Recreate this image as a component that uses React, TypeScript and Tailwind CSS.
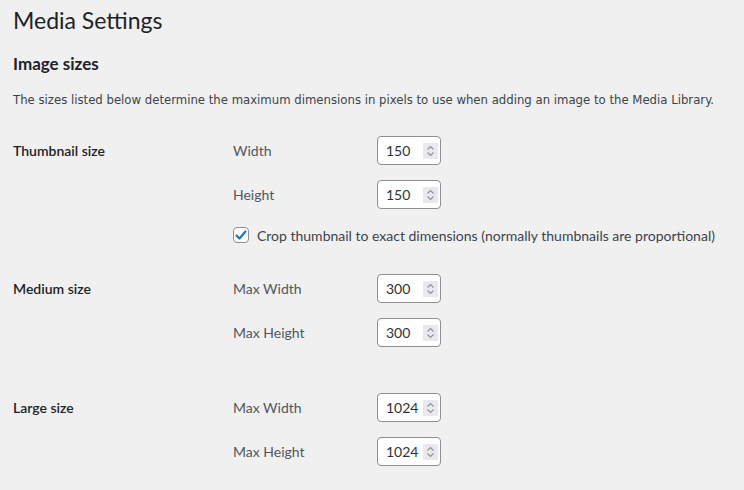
import type { ReactNode } from "react";

const font = { fontFamily: "Lato, 'Noto Sans', sans-serif" };

function Spinner() {
  return (
    <span className="flex h-[16px] w-[15px] items-center justify-center bg-[#e9e9ed]">
      <svg width="9" height="12" viewBox="0 0 9 12" fill="none" stroke="#8c8f94" strokeWidth="1.1">
        <path d="M1.5 4.5 L4.5 1.5 L7.5 4.5" />
        <path d="M1.5 7.5 L4.5 10.5 L7.5 7.5" />
      </svg>
    </span>
  );
}

function NumberBox({ value }: { value: string }) {
  return (
    <div className="flex h-[29px] w-[64px] items-center justify-between rounded-[4px] border border-[#8c8f94] bg-white pl-[8px] pr-[2px] text-[14px] text-[#2c3338]">
      <span>{value}</span>
      <Spinner />
    </div>
  );
}

function Field({ label, value, className = "" }: { label: string; value: string; className?: string }) {
  return (
    <div className={`flex h-[29px] items-center ${className}`}>
      <span className="w-[144px] text-[14px] text-[#50575e]">{label}</span>
      <NumberBox value={value} />
    </div>
  );
}

function Section({ title, children, className = "" }: { title: string; children: ReactNode; className?: string }) {
  return (
    <div className={`flex ${className}`}>
      <div className="flex h-[29px] w-[220px] items-center text-[14px] font-semibold text-[#1d2327]">{title}</div>
      <div className="flex flex-col">{children}</div>
    </div>
  );
}

export default function App() {
  return (
    <div className="h-[490px] w-[744px] overflow-hidden bg-[#f0f0f1] px-[13px]" style={font}>
      <h1 className="pt-[4px] text-[23px] leading-[32px] text-[#1d2327]">Media Settings</h1>
      <h2 className="mt-[16px] text-[17px] font-bold leading-[24px] text-[#1d2327]">Image sizes</h2>
      <p
        className="mt-[15px] whitespace-nowrap text-[13px] leading-[18px] text-[#3c434a]"
        style={{ fontFamily: "'DejaVu Sans Condensed', 'Liberation Sans Narrow', 'Liberation Sans', sans-serif" }}
      >
        The sizes listed below determine the maximum dimensions in pixels to use when adding an image to the Media Library.
      </p>

      <Section title="Thumbnail size" className="mt-[27px]">
        <Field label="Width" value="150" />
        <Field label="Height" value="150" className="mt-[15px]" />
        <label className="mt-[17px] flex h-[18px] items-center gap-[8px] text-[14px] text-[#3c434a]">
          <span className="flex h-[16px] w-[16px] items-center justify-center rounded-[4px] border border-[#8c8f94] bg-white">
            <svg width="14" height="14" viewBox="0 0 14 14" fill="none" stroke="#2271b1" strokeWidth="2.2" strokeLinecap="round" strokeLinejoin="round">
              <path d="M2.5 7.5 L5.5 10.5 L11.5 3.5" />
            </svg>
          </span>
          <span className="whitespace-nowrap">Crop thumbnail to exact dimensions (normally thumbnails are proportional)</span>
        </label>
      </Section>

      <Section title="Medium size" className="mt-[30px]">
        <Field label="Max Width" value="300" />
        <Field label="Max Height" value="300" className="mt-[15px]" />
      </Section>

      <Section title="Large size" className="mt-[46px]">
        <Field label="Max Width" value="1024" />
        <Field label="Max Height" value="1024" className="mt-[15px]" />
      </Section>
    </div>
  );
}
